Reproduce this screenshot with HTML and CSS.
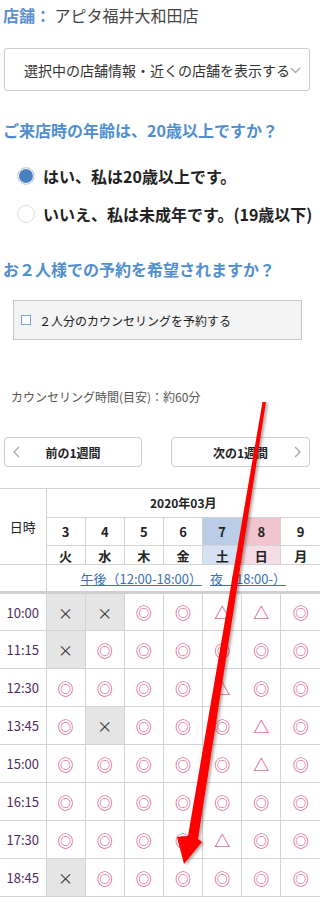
FILE: index.html
```html
<!DOCTYPE html>
<html lang="ja">
<head>
    <meta charset="utf-8">
    <title>カウンセリング予約</title>
    <link rel="stylesheet" href="styles.css">
</head>
<body>
    <div class="page">
        <p class="store"><span class="store-label">店舗：</span> アピタ福井大和田店</p>

        <div class="store-select">
            <span>選択中の店舗情報・近くの店舗を表示する</span>
            <svg class="select-arrow" width="11" height="7" viewBox="0 0 11 7"><path d="M1 1l4.5 4.5L10 1" fill="none" stroke="#aaa" stroke-width="1.4"/></svg>
        </div>

        <h2 class="question">ご来店時の年齢は、20歳以上ですか？</h2>
        <ul class="radios">
            <li class="radio checked"><span class="radio-mark"></span>はい、私は20歳以上です。</li>
            <li class="radio"><span class="radio-mark"></span>いいえ、私は未成年です。(19歳以下)</li>
        </ul>

        <h2 class="question q-pair">お２人様での予約を希望されますか？</h2>
        <label class="pair-box"><span class="check-mark"></span>２人分のカウンセリングを予約する</label>

        <p class="duration">カウンセリング時間(目安)：約60分</p>

        <!-- 週の切り替え -->
        <div class="week-nav">
            <button class="week-btn">
                <svg width="7" height="12" viewBox="0 0 7 12"><path d="M6 1L1 6l5 5" fill="none" stroke="#aaa" stroke-width="1.4"/></svg>
                <span class="week-label">前の1週間</span>
                <span class="week-pad"></span>
            </button>
            <button class="week-btn next">
                <span class="week-pad"></span>
                <span class="week-label">次の1週間</span>
                <svg width="7" height="12" viewBox="0 0 7 12"><path d="M1 1l5 5-5 5" fill="none" stroke="#aaa" stroke-width="1.4"/></svg>
            </button>
        </div>

        <table class="calendar">
            <colgroup><col class="col-time"><col span="7"></colgroup>
            <tr class="row-month">
                <th rowspan="3" class="head-time">日時</th>
                <th colspan="7">2020年03月</th>
            </tr>
            <tr class="row-day">
                <th>3</th><th>4</th><th>5</th><th>6</th>
                <th class="sat">7</th><th class="sun">8</th><th>9</th>
            </tr>
            <tr class="row-week">
                <th>火</th><th>水</th><th>木</th><th>金</th>
                <th class="sat-light">土</th><th class="sun-light">日</th><th>月</th>
            </tr>
            <tr class="row-links">
                <td></td>
                <td colspan="7"><a href="#">午後（12:00-18:00）</a>&nbsp;&nbsp;&nbsp;<a href="#">夜（18:00-）</a></td>
            </tr>
            <tr><td class="time">10:00</td><td class="full">×</td><td class="full">×</td><td class="ok">◎</td><td class="ok">◎</td><td class="few">△</td><td class="few">△</td><td class="ok">◎</td></tr>
            <tr><td class="time">11:15</td><td class="full">×</td><td class="ok">◎</td><td class="ok">◎</td><td class="ok">◎</td><td class="ok">◎</td><td class="ok">◎</td><td class="ok">◎</td></tr>
            <tr><td class="time">12:30</td><td class="ok">◎</td><td class="ok">◎</td><td class="ok">◎</td><td class="ok">◎</td><td class="few">△</td><td class="ok">◎</td><td class="ok">◎</td></tr>
            <tr><td class="time">13:45</td><td class="ok">◎</td><td class="full">×</td><td class="ok">◎</td><td class="ok">◎</td><td class="ok">◎</td><td class="few">△</td><td class="ok">◎</td></tr>
            <tr><td class="time">15:00</td><td class="ok">◎</td><td class="ok">◎</td><td class="ok">◎</td><td class="ok">◎</td><td class="ok">◎</td><td class="few">△</td><td class="ok">◎</td></tr>
            <tr><td class="time">16:15</td><td class="ok">◎</td><td class="ok">◎</td><td class="ok">◎</td><td class="ok">◎</td><td class="ok">◎</td><td class="ok">◎</td><td class="ok">◎</td></tr>
            <tr><td class="time">17:30</td><td class="ok">◎</td><td class="ok">◎</td><td class="ok">◎</td><td class="ok">◎</td><td class="few">△</td><td class="ok">◎</td><td class="ok">◎</td></tr>
            <tr><td class="time">18:45</td><td class="full">×</td><td class="ok">◎</td><td class="ok">◎</td><td class="ok">◎</td><td class="ok">◎</td><td class="ok">◎</td><td class="ok">◎</td></tr>
        </table>
    </div>

    <!-- 注釈の赤い矢印 -->
    <svg class="annotation" width="320" height="899" viewBox="0 0 320 899">
        <defs>
            <filter id="shade" x="-50%" y="-10%" width="200%" height="120%">
                <feDropShadow dx="2" dy="1" stdDeviation="1.5" flood-color="#000" flood-opacity="0.35"/>
            </filter>
        </defs>
        <polygon points="262.5,402 266,402 198,839 202,842 184,864 177,837 188,836" fill="#ff0000" filter="url(#shade)"/>
    </svg>
</body>
</html>
```

FILE: styles.css
```css
body {
    margin: 0;
    font-family: "Noto Sans CJK JP", "Liberation Sans", sans-serif;
    color: #333;
    overflow-x: hidden;
    position: relative;
}
.page {
    width: 320px;
}
.store {
    margin: 0;
    padding-left: 3px;
    height: 30px;
    line-height: 30px;
    font-size: 16px;
    color: #444;
    white-space: nowrap;
}
.store-label {
    color: #5b8fd0;
    font-weight: bold;
}
.store-select {
    display: flex;
    align-items: center;
    margin: 18px 10px 0 4px;
    height: 43px;
    box-sizing: border-box;
    border: 1px solid #ccc;
    border-radius: 3px;
    padding-left: 19px;
    font-size: 14px;
    color: #333;
    white-space: nowrap;
}
.select-arrow {
    flex: none;
    margin-top: 2px;
}
.question {
    margin: 27px 0 0;
    padding-left: 3px;
    font-size: 16px;
    line-height: 24px;
    color: #4f8fd0;
    font-weight: bold;
    white-space: nowrap;
}
.q-pair {
    margin-top: 24px;
}
.radios {
    list-style: none;
    margin: 15px 0 0;
    padding: 0 0 0 17px;
}
.radio {
    display: flex;
    align-items: center;
    gap: 8px;
    height: 38px;
    font-size: 16px;
    font-weight: bold;
    color: #222;
    white-space: nowrap;
}
.radio-mark {
    flex: none;
    width: 18px;
    height: 18px;
    box-sizing: border-box;
    border: 1px solid #ddd;
    border-radius: 50%;
    background: #fff;
}
.radio.checked .radio-mark {
    background: #4a7fc1;
    box-shadow: inset 0 0 0 1px #fff;
}
.pair-box {
    display: flex;
    align-items: center;
    gap: 8px;
    margin: 19px 0 0 13px;
    width: 289px;
    height: 40px;
    box-sizing: border-box;
    border: 1px solid #c8c8c8;
    background: #f4f4f4;
    padding-left: 7px;
    font-size: 12px;
    color: #222;
}
.check-mark {
    flex: none;
    width: 8px;
    height: 8px;
    border: 1px solid #7aa2d6;
    background: #fff;
}
.duration {
    margin: 48px 0 0;
    padding-left: 11px;
    font-size: 12px;
    line-height: 18px;
    color: #555;
}
.week-nav {
    display: flex;
    justify-content: space-between;
    margin: 31px 10px 0 4px;
}
.week-btn {
    display: flex;
    align-items: center;
    width: 138px;
    height: 30px;
    padding: 0 8px;
    border: 1px solid #ccc;
    border-radius: 4px;
    background: #fff;
    font-family: inherit;
    font-size: 12px;
    font-weight: bold;
    color: #222;
}
.week-btn.next {
    width: 139px;
}
.week-label {
    flex: 1;
    text-align: center;
}
.week-pad {
    width: 7px;
}
.calendar {
    margin-top: 21px;
    width: 320px;
    border-collapse: collapse;
    table-layout: fixed;
    font-size: 12px;
}
.col-time {
    width: 46px;
}
.calendar th,
.calendar td {
    border: 1px solid #d3d3d3;
    padding: 0;
    text-align: center;
    line-height: 1;
}
.calendar tr > :first-child {
    border-left: none;
}
.calendar tr > :last-child {
    border-right: none;
}
.row-month {
    height: 29px;
}
.row-month th {
    font-weight: bold;
    color: #222;
}
.head-time {
    font-weight: normal !important;
    font-size: 13px;
}
.row-day {
    height: 28px;
}
.row-day th {
    font-size: 13px;
    color: #222;
}
.row-week {
    height: 19px;
}
.row-week th {
    font-size: 13px;
    color: #222;
}
.sat { background: #b9cde6; }
.sun { background: #f1c4cf; }
.sat-light { background: #d5e2f3; }
.sun-light { background: #f6dce5; }
.row-links {
    height: 28px;
}
.row-links td {
    border-bottom: 3px solid #cfcfcf;
}
.row-links a {
    color: #3a72b5;
    font-size: 13px;
}
.calendar tr:not([class]) {
    height: 38px;
}
.time {
    font-size: 13px;
    color: #4e2c62;
}
.ok,
.few {
    font-size: 16px;
    color: #d23b6c;
}
.full {
    background: #e5e5e5;
    font-size: 15px;
    color: #333;
}
.annotation {
    position: absolute;
    top: 0;
    left: 0;
    pointer-events: none;
}
```
